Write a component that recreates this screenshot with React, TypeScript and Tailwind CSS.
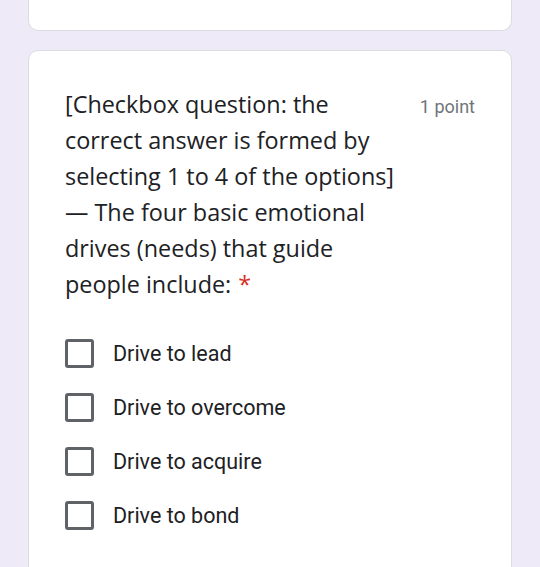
const options = ['Drive to lead', 'Drive to overcome', 'Drive to acquire', 'Drive to bond'];

export default function App() {
  return (
    <div
      className="min-h-screen bg-[#eeeaf7] px-[28px] pb-10"
      style={{ fontFamily: 'Roboto, "Noto Sans", sans-serif' }}
    >
      <div className="h-[31px] rounded-b-[10px] border border-t-0 border-[#dadce0] bg-white" />

      <div className="mt-[19px] rounded-[10px] border border-[#dadce0] bg-white px-9 pt-[35px] pb-12">
        <div className="flex items-start gap-4">
          <div
            className="flex-1 text-[23.4px] leading-[36px] text-[#202124]"
            style={{ fontFamily: '"Open Sans", Roboto, sans-serif' }}
          >
            [Checkbox question: the correct answer is formed by selecting 1 to 4 of the options] — The four basic emotional drives (needs) that guide people include:
            <span className="ml-[7px] text-[#d93025]">*</span>
          </div>
          <div className="shrink-0 pt-[9px] text-[18px] leading-[24px] text-[#70757a]">1 point</div>
        </div>

        <div className="mt-[37px] flex flex-col gap-[25px]">
          {options.map((opt) => (
            <label key={opt} className="flex items-center gap-[19px]">
              <span className="h-[29px] w-[29px] shrink-0 rounded-[3px] border-[3px] border-[#5f6368]" />
              <span className="text-[21.5px] leading-[28px] text-[#202124]">{opt}</span>
            </label>
          ))}
        </div>
      </div>
    </div>
  );
}
